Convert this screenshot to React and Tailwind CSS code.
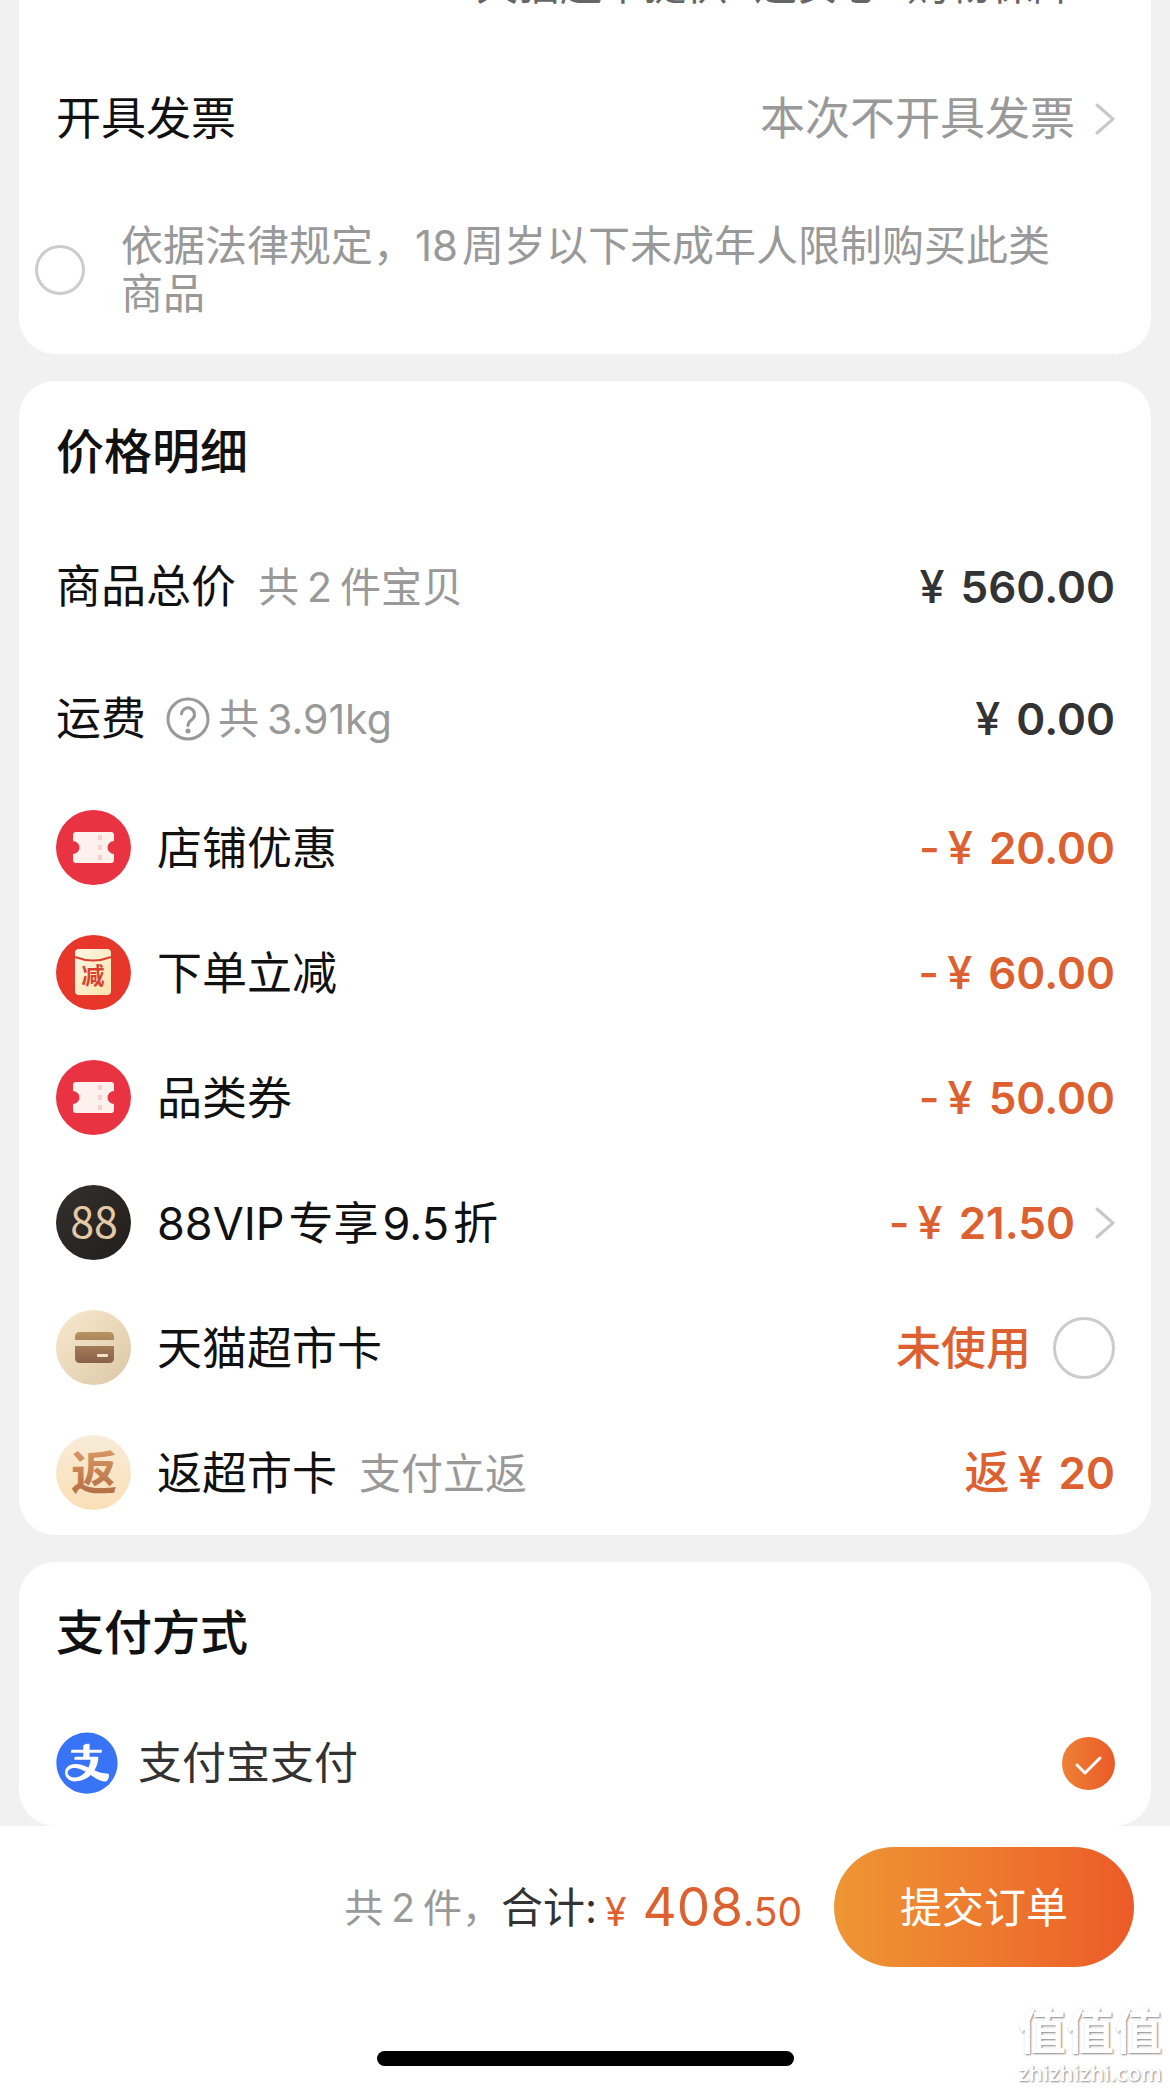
import React, { useState } from 'react';
import { AiFillAlipayCircle } from 'react-icons/ai';

const Chevron = () => (
  <svg viewBox="0 0 20 32" className="h-8 w-5 shrink-0" fill="none" aria-hidden="true">
    <path d="M2 2L18 16L2 30" stroke="#c8c8c8" strokeWidth="3" strokeLinecap="round" strokeLinejoin="round" />
  </svg>
);

const CouponIcon = () => (
  <svg viewBox="0 0 75 75" className="size-[75px] shrink-0" aria-hidden="true">
    <circle cx="37.5" cy="37.5" r="37.5" fill="#e93242" />
    <path
      d="M20 22H55Q58 22 58 25V31A6.5 6.5 0 0 0 58 44V50Q58 53 55 53H20Q17 53 17 50V44A6.5 6.5 0 0 0 17 31V25Q17 22 20 22Z"
      fill="#fdf1ee"
    />
    <path d="M44 25V52" stroke="#f9cfcf" strokeWidth="4" strokeDasharray="5 5" />
  </svg>
);

const DiscountIcon = () => (
  <svg viewBox="0 0 75 75" className="size-[75px] shrink-0" aria-hidden="true">
    <defs>
      <linearGradient id="packet" x1="0" y1="0" x2="1" y2="1">
        <stop offset="0" stopColor="#fff6e6" />
        <stop offset="1" stopColor="#fae3ac" />
      </linearGradient>
    </defs>
    <circle cx="37.5" cy="37.5" r="37.5" fill="#e7372b" />
    <rect x="19" y="14" width="36" height="46" rx="4" fill="url(#packet)" />
    <path d="M19 22Q37 29 55 22" stroke="#d9412f" strokeWidth="2" fill="none" />
    <text x="37" y="49" textAnchor="middle" fontSize="23" fontWeight="700" fill="#d9412f">减</text>
  </svg>
);

const VipIcon = () => (
  <svg viewBox="0 0 75 75" className="size-[75px] shrink-0" aria-hidden="true">
    <defs>
      <linearGradient id="vipBg" x1="0" y1="0" x2="1" y2="1">
        <stop offset="0" stopColor="#34302d" />
        <stop offset="1" stopColor="#221e1c" />
      </linearGradient>
    </defs>
    <circle cx="37.5" cy="37.5" r="37.5" fill="url(#vipBg)" />
    <text x="38" y="53" textAnchor="middle" fontSize="43" fill="#e5c9a6" className="font-['Noto_Sans_CJK_SC',sans-serif]">
      88
    </text>
  </svg>
);

const MarketCardIcon = () => (
  <svg viewBox="0 0 75 75" className="size-[75px] shrink-0" aria-hidden="true">
    <defs>
      <linearGradient id="cardBg" x1="0" y1="0" x2="1" y2="1">
        <stop offset="0" stopColor="#f9e9cd" />
        <stop offset="1" stopColor="#dac7a6" />
      </linearGradient>
      <linearGradient id="cardFg" x1="0" y1="22" x2="0" y2="53" gradientUnits="userSpaceOnUse">
        <stop offset="0" stopColor="#b89363" />
        <stop offset="1" stopColor="#8a604a" />
      </linearGradient>
    </defs>
    <circle cx="37.5" cy="37.5" r="37.5" fill="url(#cardBg)" />
    <path d="M19 30V27Q19 22 24 22H53Q58 22 58 27V30Z" fill="url(#cardFg)" />
    <path d="M19 36H58V48Q58 53 53 53H24Q19 53 19 48Z" fill="url(#cardFg)" />
    <rect x="41" y="44" width="11" height="3" rx="1" fill="#f3e2c6" />
  </svg>
);

const RebateIcon = () => (
  <svg viewBox="0 0 75 75" className="size-[75px] shrink-0" aria-hidden="true">
    <defs>
      <linearGradient id="rebateBg" x1="0" y1="0" x2="0" y2="1">
        <stop offset="0" stopColor="#f8ecd8" />
        <stop offset="1" stopColor="#fbdfb6" />
      </linearGradient>
      <linearGradient id="rebateFg" x1="0" y1="0" x2="0" y2="1">
        <stop offset="0" stopColor="#dc9c68" />
        <stop offset="1" stopColor="#b06a42" />
      </linearGradient>
    </defs>
    <circle cx="37.5" cy="37.5" r="37.5" fill="url(#rebateBg)" />
    <text x="38" y="54" textAnchor="middle" fontSize="46" fontWeight="700" fill="url(#rebateFg)">返</text>
  </svg>
);

// 中文与数字之间的窄间距
const Gap = ({ children }) => <span className="mx-1">{children}</span>;
const WideGap = ({ children }) => <span className="mx-2">{children}</span>;

const discounts = [
  { label: '店铺优惠', amount: '20.00', Icon: CouponIcon },
  { label: '下单立减', amount: '60.00', Icon: DiscountIcon },
  { label: '品类券', amount: '50.00', Icon: CouponIcon },
  {
    label: <>88VIP<Gap>专享</Gap>9.5<Gap>折</Gap></>,
    amount: '21.50',
    Icon: VipIcon,
    link: true,
  },
];

const Price = ({ prefix, children }) => (
  <span className="flex items-center font-medium">
    {prefix && <span className="mr-2">{prefix}</span>}
    <span className="mr-4">¥</span>
    <span className="text-[44px] font-semibold">{children}</span>
  </span>
);

const App = () => {
  const [adult, setAdult] = useState(false);
  const [useCard, setUseCard] = useState(false);

  return (
    <div className="relative min-h-screen overflow-hidden bg-[#f1f1f1] font-['Inter','Noto_Sans_CJK_SC',sans-serif] text-[45px] leading-[60px] text-[#111]">
      <main className="mx-[19px] flex flex-col gap-[27px]">
        {/* 服务与发票 */}
        <section className="rounded-b-[36px] bg-white pb-9">
          <p className="-mt-[45px] pr-[76px] text-right text-[42px] text-[#666]">
            天猫超市提供<WideGap>“送安心”</WideGap>购物保障
          </p>
          <div className="mt-[74px] flex items-center justify-between pr-9 pl-[37px]">
            <span>开具发票</span>
            <button type="button" className="flex items-center gap-5 text-[#999]">
              本次不开具发票
              <Chevron />
            </button>
          </div>
          <label className="mt-[73px] flex items-center gap-9 pr-[76px] pl-4 text-[42px] leading-12 text-[#999]">
            <input
              type="checkbox"
              checked={adult}
              onChange={() => setAdult(!adult)}
              className="size-[50px] shrink-0 appearance-none rounded-full border-3 border-[#ccc] checked:bg-[#ee5a2a]"
            />
            <span>依据法律规定，<span className="mr-1">18</span>周岁以下未成年人限制购买此类商品</span>
          </label>
        </section>

        {/* 价格明细 */}
        <section className="rounded-[36px] bg-white pr-9 pb-[25px] pl-[37px]">
          <h2 className="pt-[41px] text-[48px] font-medium">价格明细</h2>
          <div className="mt-[75px] flex items-center justify-between">
            <div className="flex items-center gap-[22px]">
              <span>商品总价</span>
              <span className="text-[41px] text-[#999]">共<WideGap>2</WideGap>件宝贝</span>
            </div>
            <span className="text-[#333]"><Price>560.00</Price></span>
          </div>
          <div className="mt-[72px] flex items-center justify-between">
            <div className="flex items-center">
              <span>运费</span>
              <button type="button" aria-label="运费说明" className="mr-2 ml-5">
                <svg viewBox="0 0 44 44" className="size-11" fill="none" stroke="#999" strokeWidth="3">
                  <circle cx="22" cy="22" r="20" />
                  <path d="M15.5 17a6.5 6.5 0 1 1 10.500 5.500c-3 2-4 3-4 6" strokeLinecap="round" />
                  <circle cx="22" cy="34" r="1" fill="#999" />
                </svg>
              </button>
              <span className="text-[41px] text-[#999]">共<WideGap>3.91kg</WideGap></span>
            </div>
            <span className="text-[#333]"><Price>0.00</Price></span>
          </div>

          <ul className="mt-[61px] flex flex-col gap-[50px]">
            {discounts.map(({ label, amount, Icon, link }) => (
              <li key={amount} className="flex items-center">
                <Icon />
                <span className="ml-[26px] flex-1 pt-0.5">{label}</span>
                {link ? (
                  <button type="button" className="flex items-center gap-5 text-[#dd6030]">
                    <Price prefix="-">{amount}</Price>
                    <Chevron />
                  </button>
                ) : (
                  <span className="text-[#dd6030]"><Price prefix="-">{amount}</Price></span>
                )}
              </li>
            ))}
            <li>
              <label className="flex items-center">
                <MarketCardIcon />
                <span className="ml-[26px] flex-1 pt-0.5">天猫超市卡</span>
                <span className="pt-0.5 font-medium text-[#dd6030]">未使用</span>
                <input
                  type="checkbox"
                  checked={useCard}
                  onChange={() => setUseCard(!useCard)}
                  className="ml-[22px] size-[62px] shrink-0 appearance-none rounded-full border-3 border-[#ccc] checked:bg-[#ee5a2a]"
                />
              </label>
            </li>
            <li className="flex items-center">
              <RebateIcon />
              <span className="ml-[26px] pt-0.5">返超市卡</span>
              <span className="ml-[22px] flex-1 pt-0.5 text-[42px] text-[#999]">支付立返</span>
              <span className="text-[#dd6030]"><Price prefix="返">20</Price></span>
            </li>
          </ul>
        </section>

        {/* 支付方式 */}
        <section className="rounded-[36px] bg-white pr-9 pb-8 pl-[37px]">
          <h2 className="pt-[41px] text-[48px] font-medium">支付方式</h2>
          <label className="mt-[69px] flex items-center">
            <AiFillAlipayCircle className="-m-1 size-[70px] shrink-0 text-[#3874f5]" />
            <span className="ml-5 flex-1 text-[44px] text-[#333]">支付宝支付</span>
            <input type="radio" name="pay" defaultChecked className="peer sr-only" />
            <svg viewBox="0 0 53 53" className="size-[53px] shrink-0" aria-hidden="true">
              <defs>
                <linearGradient id="checkBg" x1="0" y1="0" x2="1" y2="0">
                  <stop offset="0" stopColor="#ee8135" />
                  <stop offset="1" stopColor="#ea5a28" />
                </linearGradient>
              </defs>
              <circle cx="26.5" cy="26.5" r="26.5" fill="url(#checkBg)" />
              <path d="M15 28L23 36L38 21" fill="none" stroke="#fff" strokeWidth="3" strokeLinecap="round" strokeLinejoin="round" />
            </svg>
          </label>
        </section>
      </main>

      {/* 底部结算栏 */}
      <footer className="bg-white pt-[21px]">
        <div className="flex items-center justify-end pr-9">
          <span className="pt-0.5 text-[39px] text-[#999]">共<WideGap>2</WideGap>件，</span>
          <span className="pt-0.5 text-[42px] text-[#333]">合计:</span>
          <span className="ml-2 flex items-baseline pt-1 text-[#dd6030]">
            <span className="mr-4 text-[39px]">¥</span>
            <span className="text-[53px]">408</span>
            <span className="text-[39px]">.50</span>
          </span>
          <button type="button" className="ml-8 h-30 w-[300px] rounded-full bg-linear-to-r from-[#ee9634] to-[#ec5a28] pt-0.5 text-[42px] text-white">
            提交订单
          </button>
        </div>
        <div className="flex justify-center pt-[84px] pb-6">
          <div className="h-[15px] w-[417px] rounded-full bg-black" />
        </div>
      </footer>

      <div className="absolute right-2 bottom-1 text-center text-white [text-shadow:1px_1px_2px_#888]">
        <p className="text-[48px] leading-[52px] font-bold">值值值</p>
        <p className="font-['Open_Sans',sans-serif] text-[22px] leading-7 font-semibold">zhizhizhi.com</p>
      </div>
    </div>
  );
};

export default App;
